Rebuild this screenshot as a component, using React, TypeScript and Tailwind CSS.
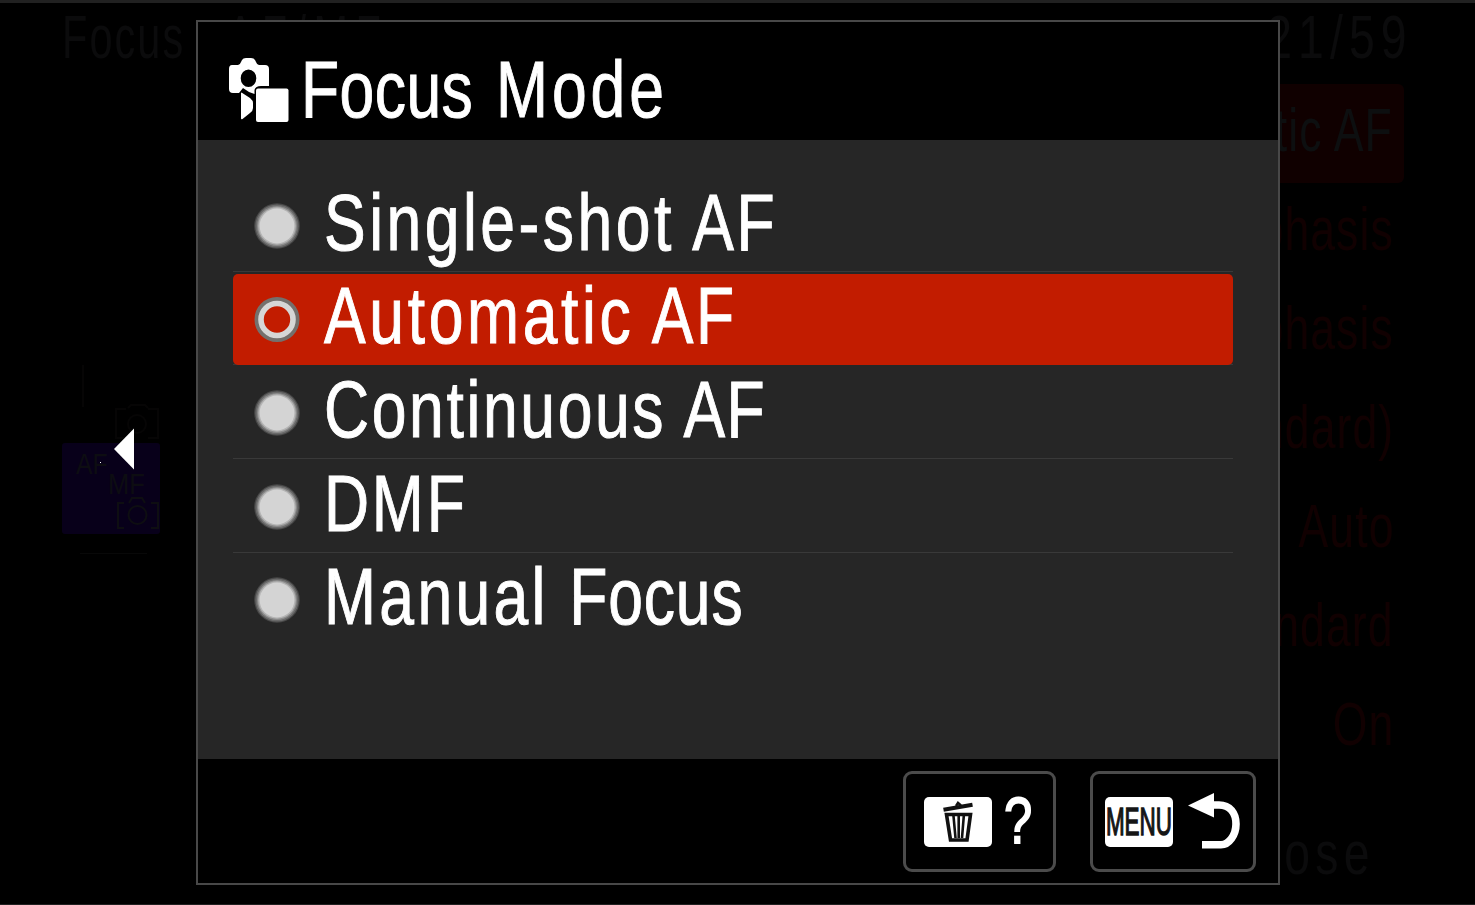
import React from "react";

type Word = { text: string; tracking: string };
type Option = { words: Word[]; divider: string };

const options: Option[] = [
  {
    words: [
      { text: "Single-shot", tracking: "tracking-[4.5px]" },
      { text: "AF", tracking: "tracking-[3.4px]" },
    ],
    divider: "border-[#393939]",
  },
  {
    words: [
      { text: "Automatic", tracking: "tracking-[4.7px]" },
      { text: "AF", tracking: "tracking-[3.2px]" },
    ],
    divider: "border-[#393939]",
  },
  {
    words: [
      { text: "Continuous", tracking: "tracking-[3.4px]" },
      { text: "AF", tracking: "tracking-[1.8px]" },
    ],
    divider: "border-[#393939]",
  },
  { words: [{ text: "DMF", tracking: "tracking-[3.6px]" }], divider: "border-[#393939]" },
  {
    words: [
      { text: "Manual", tracking: "tracking-[4.3px] mr-[4px]" },
      { text: "Focus", tracking: "tracking-[1.1px]" },
    ],
    divider: "border-transparent",
  },
];

const title: Word[] = [
  { text: "Focus", tracking: "tracking-[0.6px] mr-[7px]" },
  { text: "Mode", tracking: "tracking-[5px]" },
];

const settings = [
  "Automatic AF",
  "Emphasis",
  "Emphasis",
  "(Standard)",
  "Auto",
  "Standard",
  "On",
];

function Words({ words }: { words: Word[] }) {
  return (
    <>
      {words.map((word, i) => (
        <React.Fragment key={word.text}>
          {i > 0 ? " " : ""}
          <span className={word.tracking}>{word.text}</span>
        </React.Fragment>
      ))}
    </>
  );
}

function Radio({ selected }: { selected: boolean }) {
  return (
    <svg className="h-[48px] w-[48px] shrink-0" viewBox="0 0 48 48">
      {selected ? (
        <>
          <circle cx="24" cy="24.5" r="19.8" fill="none" stroke="#74706d" strokeWidth="5.400" />
          <circle cx="24" cy="24.5" r="16" fill="none" stroke="#d6d6d6" strokeWidth="5.600" />
        </>
      ) : (
        <>
          <circle cx="24" cy="24" r="22.800" fill="#484848" />
          <circle cx="24" cy="24" r="21.600" fill="#6a6a6a" />
          <circle cx="24" cy="24" r="20" fill="#8c8c8c" />
          <circle cx="24" cy="24" r="18.800" fill="#b4b4b4" />
          <circle cx="24" cy="24" r="17.400" fill="#d4d4d4" />
        </>
      )}
    </svg>
  );
}

function CameraModeIcon() {
  return (
    <svg className="h-[66px] w-[62px] shrink-0" viewBox="0 0 62 66">
      <path
        fill="#fff"
        fillRule="evenodd"
        d="M4 8H10Q12 8 13 5L14 3Q15 1 18 1H23Q26 1 27 3L28 5Q29 8 31 8H37Q41 8 41 12V29H33Q27.500 29 26.500 33V37L21 35L15 31L11 36H5Q1 36 1 32V12Q1 8 4 8ZM20.500 12.500A7.800 8.800 0 1 0 20.500 30.100A7.800 8.800 0 1 0 20.500 12.500Z"
      />
      <path fill="#fff" d="M13.500 35.500L22 41Q25 43.500 25 46V51Q25 54 22 56L14.500 62Q13 63 13 61V36Z" />
      <rect x="28" y="31.500" width="32.500" height="33.500" rx="2" fill="#fff" />
    </svg>
  );
}

function TrashIcon() {
  return (
    <svg className="h-[44px] w-[34px]" viewBox="0 0 34 44" fill="none" stroke="#111">
      <path d="M2.500 9.800L31.500 4.800" strokeWidth="4.200" />
      <path d="M15 6L17 2.800L20 5.500" strokeWidth="2.400" />
      <path d="M5.500 14.500H29.500L26 40H9.500Z" strokeWidth="3.600" />
      <path d="M12.500 16L14.500 38M22.800 16L21 38M17.700 16V38" strokeWidth="2.600" />
    </svg>
  );
}

function ReturnIcon() {
  return (
    <svg className="h-[58px] w-[54px]" viewBox="0 0 54 58">
      <path d="M1 12.500L27 0V24.500Z" fill="#fff" />
      <path
        d="M25 12H32C43 12 49 20 49 31C49 42 42 51.800 34 51.800H15"
        fill="none"
        stroke="#fff"
        strokeWidth="7.600"
      />
    </svg>
  );
}

function DimmedMenu() {
  return (
    <div className="absolute inset-x-0 -top-[3px] bottom-0 flex flex-col overflow-hidden text-[61px] leading-[72px] text-[#0b0b0c]">
      <div className="flex h-[84px] shrink-0 justify-between pt-[1px] pr-[62px] pl-[62px]">
        <span className="origin-left scale-x-[0.68] whitespace-nowrap">
          <span className="mr-[44px] tracking-[3px]">Focus</span> <span className="tracking-[11px]">AF/MF</span>
        </span>
        <span className="origin-right scale-x-[0.76] tracking-[8px] whitespace-nowrap">21/59</span>
      </div>
      <div className="flex h-[715px] shrink-0 justify-between">
        <div className="flex w-[200px] flex-col pt-[280px] pl-[62px]">
          <svg className="h-[79px] w-[98px]" viewBox="0 0 98 79" fill="none" stroke="#060505" strokeWidth="2">
            <path d="M21 1V43M64 45H54V74H64M86 45H96V74H86M66 44L69 41H83L86 44" />
            <circle cx="75" cy="60" r="9" />
          </svg>
          <div className="flex h-[91px] w-[98px] flex-col rounded-[3px] bg-[#08001a] pt-[4px] text-[30px] leading-[34px] text-[#0d0d12]">
            <span className="ml-[14px] h-[20px] w-[50px] origin-left scale-x-[0.82] leading-[34px]">AF</span>
            <span className="ml-[46px] h-[30px] w-[50px] origin-left scale-x-[0.85] leading-[34px]">MF</span>
            <svg className="ml-[54px] h-[33px] w-[44px]" viewBox="0 0 44 33" fill="none" stroke="#0e0e12" strokeWidth="2">
              <path d="M8 6H2V31H8M35 31H42V6H35M13 6L16 1H26L29 6" />
              <circle cx="21.500" cy="18" r="9" />
            </svg>
          </div>
          <div className="mt-[19px] ml-[18px] h-px w-[67px] bg-[#080808]" />
        </div>
        <div className="flex w-[560px] flex-col items-end pr-[71px] text-[#110001]">
          {settings.map((value, i) => (
            <div
              key={i}
              className={
                i === 0
                  ? "flex h-[99px] w-full items-center justify-end rounded-[6px] bg-[#100000] pr-[11px] text-[#0d0f10]"
                  : "flex h-[99px] w-full items-center justify-end pr-[10px]"
              }
            >
              <span className="relative -top-[4px] origin-right scale-x-[0.73] tracking-[1.500px] whitespace-nowrap">
                {value}
              </span>
            </div>
          ))}
        </div>
      </div>
      <div className="flex justify-end pt-[18px] pr-[100px]">
        <span className="origin-right scale-x-[0.76] tracking-[7px]">Close</span>
      </div>
    </div>
  );
}

export default function App() {
  return (
    <div className="relative h-[905px] w-[1475px] overflow-hidden border-t-[3px] border-b border-[#212121] bg-black font-['Liberation_Sans',sans-serif]">
      <DimmedMenu />
      <svg className="absolute top-[425px] left-[99px] h-[42px] w-[36px]" viewBox="0 0 36 42">
        <path d="M15 21L35 0.500V41.500Z" fill="#fff" />
        <rect x="1" y="34" width="1" height="1" fill="#fff" />
      </svg>
      <main className="relative mt-[17px] ml-[196px] flex h-[865px] w-[1084px] flex-col border-2 border-[#484848] bg-black text-white">
        <header className="flex h-[118px] shrink-0 items-start pt-[35px] pl-[30px]">
          <CameraModeIcon />
          <h1 className="-mt-[13px] ml-[11px] origin-left scale-x-[0.78] text-[80px] leading-[92px] whitespace-nowrap [-webkit-text-stroke:1px_white]">
            <Words words={title} />
          </h1>
        </header>
        <ul className="flex h-[619px] shrink-0 flex-col bg-[#262626] pt-[38px] pr-[45px] pl-[35px]">
          {options.map((option, i) => (
            <li
              key={i}
              className={`flex h-[93.700px] shrink-0 flex-col border-b pb-[1px] pt-[2px] ${option.divider}`}
            >
              <div
                className={`flex h-[91px] shrink-0 items-center rounded-[5px] pl-[20px] ${i === 1 ? "bg-[#c21c00]" : ""}`}
              >
                <Radio selected={i === 1} />
                <span className="relative -top-[3px] ml-[23px] origin-left scale-x-[0.78] text-[80px] leading-[90px] whitespace-nowrap [-webkit-text-stroke:1px_white]">
                  <Words words={option.words} />
                </span>
              </div>
            </li>
          ))}
        </ul>
        <footer className="flex flex-1 items-start justify-end gap-[34px] pt-[12px] pr-[22px]">
          <button className="flex h-[101px] w-[153px] items-center rounded-[9px] border-[3px] border-[#4b4b4b] pl-[18px]">
            <span className="flex h-[50px] w-[68px] items-center justify-center rounded-[5px] bg-white">
              <TrashIcon />
            </span>
            <span className="relative -top-[1px] ml-[12px] w-[32px] origin-left scale-x-[0.78] text-left text-[65px] leading-[70px] [-webkit-text-stroke:1.8px_white]">
              ?
            </span>
          </button>
          <button className="flex h-[101px] w-[166px] items-center rounded-[9px] border-[3px] border-[#4b4b4b] pl-[12px]">
            <span className="flex h-[50px] w-[68px] items-center justify-center rounded-[5px] bg-white">
              <span className="scale-x-[0.59] text-[38px] leading-[50px] text-[#151515] [-webkit-text-stroke:1.4px_#151515]">
                MENU
              </span>
            </span>
            <span className="ml-[14px]">
              <ReturnIcon />
            </span>
          </button>
        </footer>
      </main>
    </div>
  );
}
